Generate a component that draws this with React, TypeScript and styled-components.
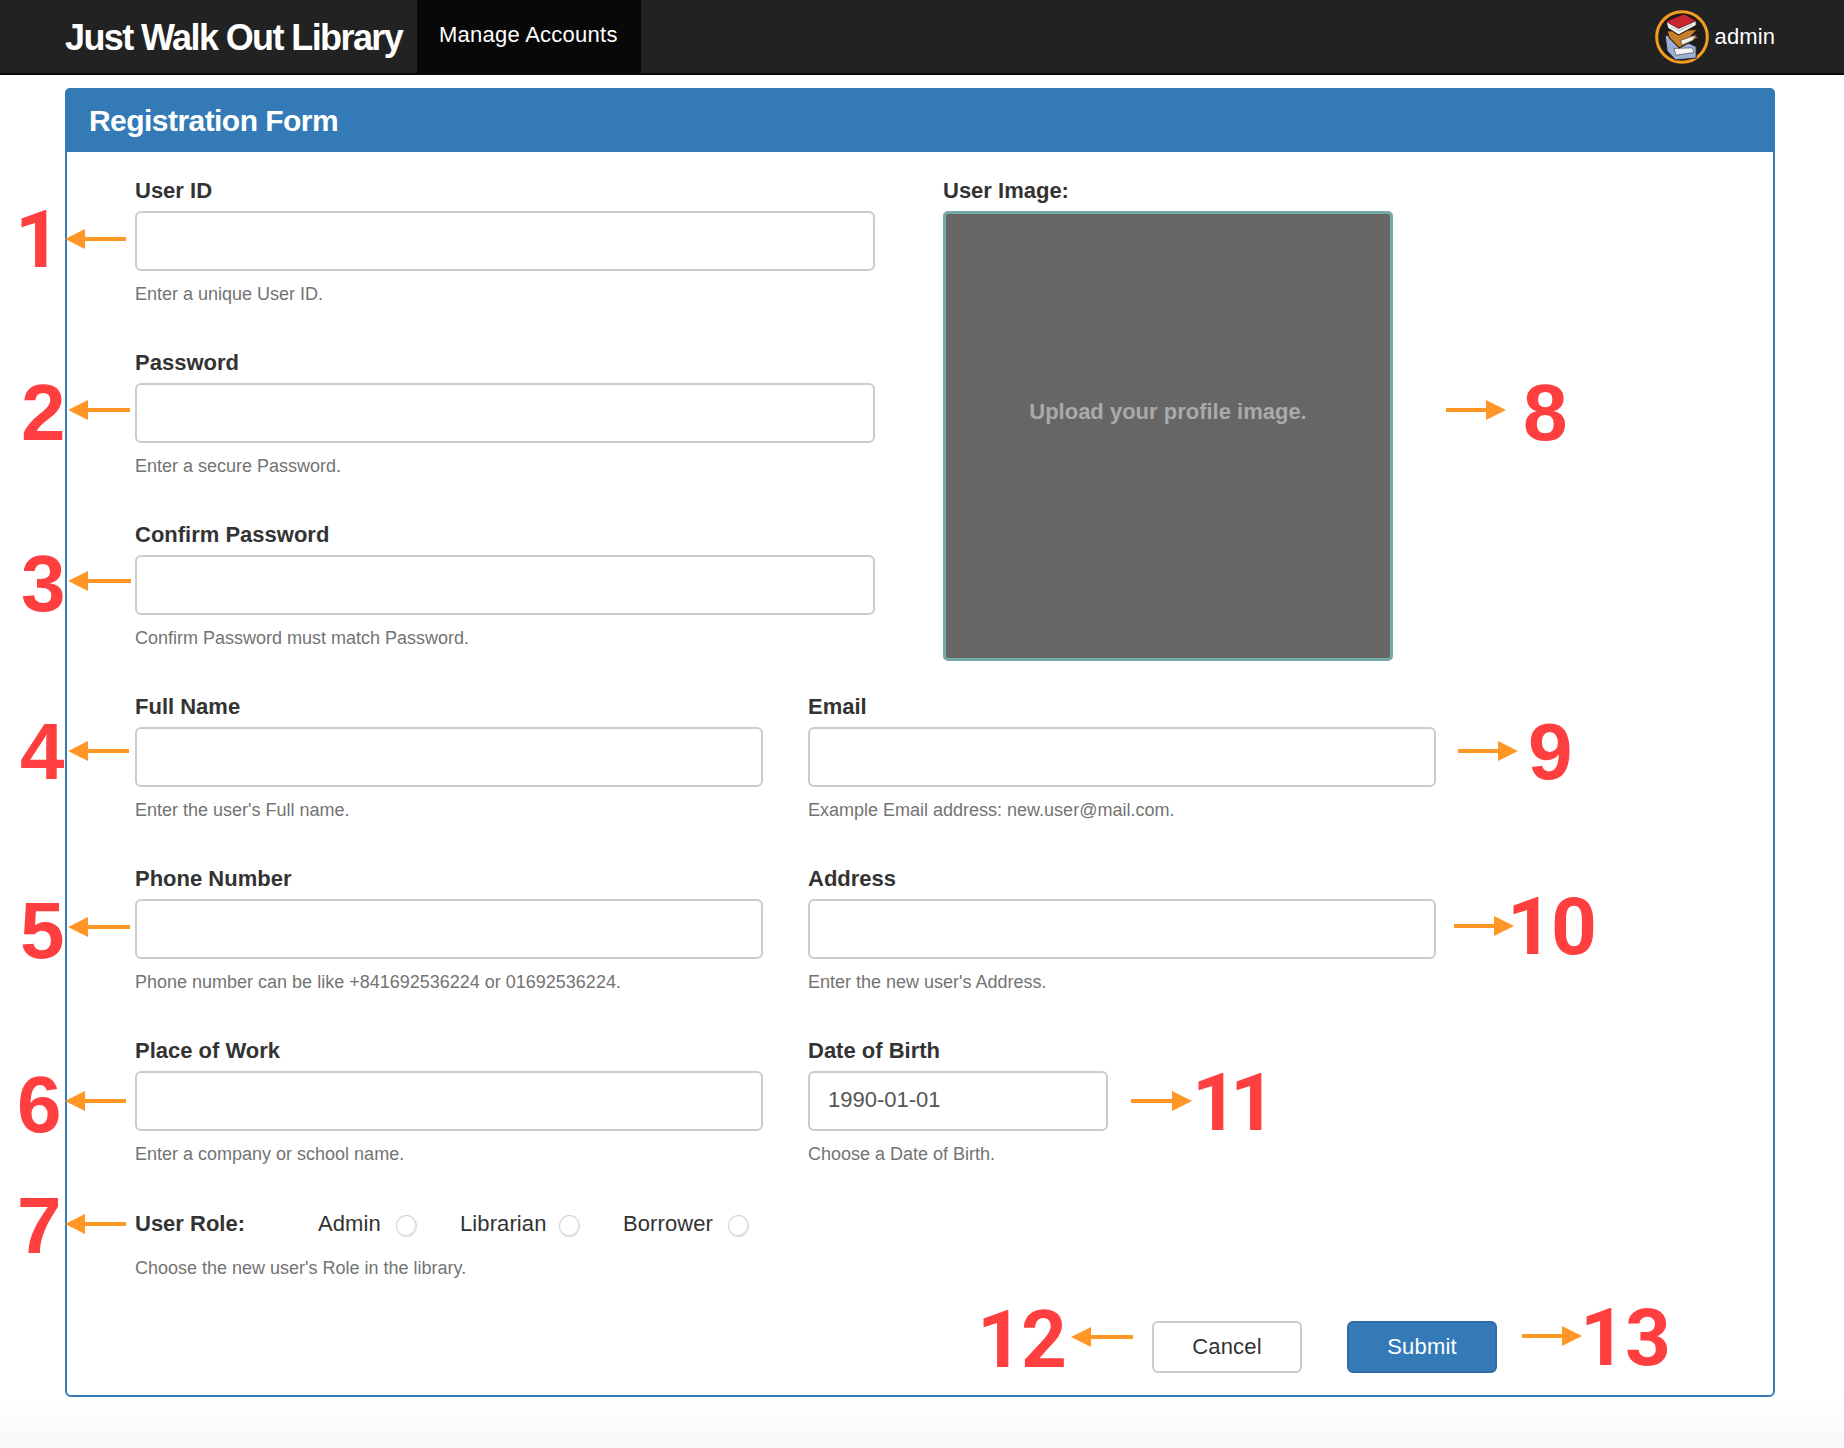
import React from "react";
import styled, { createGlobalStyle } from "styled-components";

const Global = createGlobalStyle`
  html, body { margin: 0; padding: 0; }
  body {
    width: 1844px;
    height: 1448px;
    overflow: hidden;
    font-family: "Liberation Sans", Arial, sans-serif;
    color: #333;
    background: linear-gradient(to bottom, #fff 0, #fff 1396px, #f8f8f8 1448px);
  }
  * { box-sizing: border-box; }
`;

const Page = styled.div`
  position: relative;
  width: 1844px;
  height: 1448px;
`;

const Navbar = styled.header`
  display: flex;
  align-items: stretch;
  height: 75px;
  padding-left: 65px;
  padding-right: 69px;
  background: #222;
  border-bottom: 2px solid #080808;
`;

const Brand = styled.div`
  width: 352px;
  font-size: 36px;
  line-height: 75px;
  font-weight: 700;
  letter-spacing: -1.6px;
  color: #fff;
  white-space: nowrap;
`;

const NavItem = styled.div`
  width: 224px;
  height: 73px;
  padding-left: 22px;
  font-size: 22px;
  line-height: 69px;
  color: #fff;
  background: #080808;
  letter-spacing: 0.25px;
  white-space: nowrap;
`;

const UserBox = styled.div`
  margin-left: auto;
  display: flex;
  align-items: center;
  gap: 6px;
  height: 73px;
  color: #fff;
  font-size: 22px;
  letter-spacing: 0.1px;
`;

const Panel = styled.section`
  width: 1710px;
  margin: 13px 0 0 65px;
  border: 2px solid #337ab7;
  border-radius: 6px;
  background: #fff;
`;

const PanelHeading = styled.h2`
  margin: -2px -2px 0;
  height: 64px;
  padding-left: 24px;
  font-size: 30px;
  line-height: 65px;
  font-weight: 700;
  letter-spacing: -0.55px;
  color: #fff;
  background: #337ab7;
  border-radius: 5px 5px 0 0;
`;

const PanelBody = styled.div`
  padding: 27px 276px 22px 68px;
`;

const TopSection = styled.div`
  display: flex;
  gap: 68px;
`;

const Column = styled.div`
  width: 740px;
  flex: none;
`;

const Row = styled.div`
  display: grid;
  grid-template-columns: 628px 628px;
  column-gap: 45px;
`;

const Field = styled.div`
  height: 172px;
`;

const Label = styled.label`
  display: block;
  height: 24px;
  margin-bottom: 8px;
  font-size: 22px;
  line-height: 24px;
  font-weight: 700;
  color: #333;
`;

const TextInput = styled.input<{ $short?: boolean }>`
  display: block;
  width: ${(p) => (p.$short ? "300px" : "100%")};
  height: 60px;
  padding: 0 18px;
  padding-bottom: ${(p) => (p.$short ? "2px" : "0")};
  border: 2px solid #ccc;
  border-radius: 6px;
  outline: none;
  background: #fff;
  color: #555;
  font-family: inherit;
  font-size: 22px;
`;

const Help = styled.p`
  margin: 11px 0 0;
  font-size: 18px;
  line-height: 24px;
  color: #737373;
`;

const ImageColumn = styled.div`
  width: 450px;
  flex: none;
`;

const ImageBox = styled.div`
  width: 450px;
  height: 450px;
  padding-top: 184px;
  border: 3px solid #76aaa8;
  border-radius: 5px;
  background: #666;
  color: #aaa;
  font-size: 22px;
  line-height: 27px;
  font-weight: 700;
  text-align: center;
`;

const RoleRow = styled.div`
  display: flex;
  align-items: center;
  height: 26px;
  font-size: 22px;
  line-height: 26px;
`;

const RoleLabel = styled.span`
  width: 183px;
  font-weight: 700;
`;

const RoleOption = styled.label<{ $width: number; $gap: number }>`
  display: flex;
  align-items: center;
  justify-content: space-between;
  width: ${(p) => p.$width}px;
  margin-right: ${(p) => p.$gap}px;
  letter-spacing: 0.1px;
`;

const Radio = styled.span`
  display: block;
  width: 21px;
  height: 22px;
  margin-top: 4px;
  border-radius: 50%;
  border: 1.5px solid #d4d4d4;
  background: #fff;
  box-shadow: inset -1px -1px 1px #e4e4e4;
`;

const RoleHelp = styled(Help)`
  margin-top: 19px;
`;

const Actions = styled.div`
  display: flex;
  justify-content: flex-end;
  gap: 45px;
  margin-top: 41px;
`;

const Button = styled.button<{ $primary?: boolean }>`
  width: 150px;
  height: 52px;
  padding: 0;
  border-radius: 6px;
  font-family: inherit;
  font-size: 22px;
  letter-spacing: 0.2px;
  border: 2px solid ${(p) => (p.$primary ? "#2e6da4" : "#ccc")};
  background: ${(p) => (p.$primary ? "#337ab7" : "#fff")};
  color: ${(p) => (p.$primary ? "#fff" : "#333")};
`;

const Digit = styled.span<{ $x: number; $y: number; $flagOne: boolean; $track: number }>`
  position: absolute;
  left: ${(p) => p.$x}px;
  top: ${(p) => p.$y}px;
  transform: translateY(-50%);
  font-family: ${(p) => (p.$flagOne ? '"Roboto", "Liberation Sans", sans-serif' : '"Liberation Sans", sans-serif')};
  font-size: 80px;
  line-height: 80px;
  font-weight: 700;
  letter-spacing: ${(p) => p.$track}px;
  color: #ff3f3f;
`;

const ArrowSvg = styled.svg<{ $x: number; $y: number }>`
  position: absolute;
  left: ${(p) => p.$x}px;
  top: ${(p) => p.$y - 10}px;
  display: block;
`;

const Arrow = ({ x, y, w, left }: { x: number; y: number; w: number; left?: boolean }) => (
  <ArrowSvg $x={x} $y={y} width={w} height={20} viewBox={`0 0 ${w} 20`}>
    {left ? (
      <>
        <path d={`M20 10H${w}`} stroke="#ff9625" strokeWidth="4" />
        <path d="M0 10L20 0V20Z" fill="#ff9625" />
      </>
    ) : (
      <>
        <path d={`M0 10H${w - 20}`} stroke="#ff9625" strokeWidth="4" />
        <path d={`M${w} 10L${w - 20} 0V20Z`} fill="#ff9625" />
      </>
    )}
  </ArrowSvg>
);

const Logo = () => (
  <svg width="54" height="54" viewBox="0 0 160 160">
    <circle cx="80" cy="80" r="75" fill="#1c1c1c" stroke="#f39c1f" strokeWidth="9" />
    <path d="M30 76L46 74L122 108V142L60 148L36 122Z" fill="#9fb0d6" stroke="#22242e" strokeWidth="3" />
    <path d="M56 114L110 112L116 126L62 134Z" fill="#f4f4f8" stroke="#444" strokeWidth="2" />
    <path d="M36 62L126 58L108 76L132 80L72 112L42 82Z" fill="#c77f2c" stroke="#2b1a08" strokeWidth="3" />
    <path d="M76 90L122 74L112 90L80 104Z" fill="#f6f3ea" stroke="#444" strokeWidth="2" />
    <path d="M33 34L86 12L122 32V46L70 74L38 54Z" fill="#f6f6f6" stroke="#221010" strokeWidth="3" />
    <path d="M33 34L86 12L122 32L70 55Z" fill="#c9252f" stroke="#3a0a0a" strokeWidth="2" />
    <path d="M46 48L70 62L112 42" fill="none" stroke="#999" strokeWidth="2" />
  </svg>
);

const Plain = ({ label, help }: { label: string; help: string }) => (
  <Field>
    <Label>{label}</Label>
    <TextInput />
    <Help>{help}</Help>
  </Field>
);

const marks: [string, number, number, number][] = [
  ["1", 15, 240, 0],
  ["2", 21, 413, 0],
  ["3", 21, 584, 0],
  ["4", 20, 752, 0],
  ["5", 20, 931, 0],
  ["6", 17, 1105, 0],
  ["7", 17, 1226, 0],
  ["8", 1523, 413, 0],
  ["9", 1528, 752, 0],
  ["10", 1507, 927, -2],
  ["11", 1192, 1103, -8],
  ["12", 977, 1340, -2],
  ["13", 1580, 1338, -1],
];

const arrows: { x: number; y: number; w: number; left?: boolean }[] = [
  { x: 65, y: 239, w: 61, left: true },
  { x: 68, y: 410, w: 62, left: true },
  { x: 68, y: 581, w: 63, left: true },
  { x: 68, y: 751, w: 61, left: true },
  { x: 68, y: 927, w: 62, left: true },
  { x: 65, y: 1101, w: 61, left: true },
  { x: 65, y: 1224, w: 61, left: true },
  { x: 1446, y: 410, w: 60 },
  { x: 1458, y: 751, w: 60 },
  { x: 1454, y: 926, w: 60 },
  { x: 1131, y: 1101, w: 61 },
  { x: 1071, y: 1337, w: 62, left: true },
  { x: 1522, y: 1336, w: 60 },
];

export default function App() {
  return (
    <Page>
      <Global />
      <Navbar>
        <Brand>Just Walk Out Library</Brand>
        <NavItem>Manage Accounts</NavItem>
        <UserBox>
          <Logo />
          admin
        </UserBox>
      </Navbar>
      <Panel>
        <PanelHeading>Registration Form</PanelHeading>
        <PanelBody>
          <TopSection>
            <Column>
              <Plain label="User ID" help="Enter a unique User ID." />
              <Plain label="Password" help="Enter a secure Password." />
              <Plain label="Confirm Password" help="Confirm Password must match Password." />
            </Column>
            <ImageColumn>
              <Label>User Image:</Label>
              <ImageBox>Upload your profile image.</ImageBox>
            </ImageColumn>
          </TopSection>
          <Row>
            <Plain label="Full Name" help="Enter the user's Full name." />
            <Plain label="Email" help="Example Email address: new.user@mail.com." />
          </Row>
          <Row>
            <Plain label="Phone Number" help="Phone number can be like +841692536224 or 01692536224." />
            <Plain label="Address" help="Enter the new user's Address." />
          </Row>
          <Row>
            <Plain label="Place of Work" help="Enter a company or school name." />
            <Field>
              <Label>Date of Birth</Label>
              <TextInput $short defaultValue="1990-01-01" />
              <Help>Choose a Date of Birth.</Help>
            </Field>
          </Row>
          <RoleRow>
            <RoleLabel>User Role:</RoleLabel>
            <RoleOption $width={99} $gap={43}>Admin<Radio /></RoleOption>
            <RoleOption $width={120} $gap={43}>Librarian<Radio /></RoleOption>
            <RoleOption $width={126} $gap={44}>Borrower<Radio /></RoleOption>
          </RoleRow>
          <RoleHelp>Choose the new user's Role in the library.</RoleHelp>
          <Actions>
            <Button>Cancel</Button>
            <Button $primary>Submit</Button>
          </Actions>
        </PanelBody>
      </Panel>
      {arrows.map((a) => (
        <Arrow key={`${a.x}-${a.y}`} {...a} />
      ))}
      {marks.map(([t, x, y, track]) => (
        <Digit key={t} $x={x} $y={y} $flagOne={t.includes("1")} $track={track}>{t}</Digit>
      ))}
    </Page>
  );
}
